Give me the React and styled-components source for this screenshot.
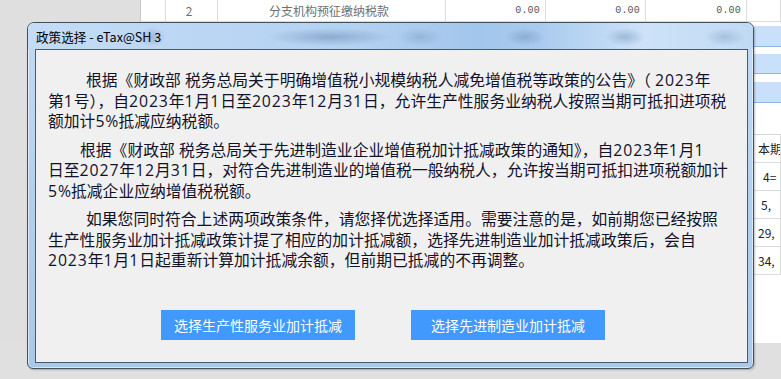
import React from "react";
import styled, { createGlobalStyle } from "styled-components";

const Global = createGlobalStyle`
  html, body { margin: 0; padding: 0; }
  body { width: 781px; height: 379px; overflow: hidden; background: #e0e0e0; }
  * { box-sizing: border-box; }
`;

const Page = styled.div`
  position: relative;
  width: 781px;
  height: 379px;
  overflow: hidden;
  display: flex;
  flex-direction: column;
  font-family: "Noto Sans CJK SC", "Noto Sans", sans-serif;
`;

const Backdrop = styled.div`
  display: flex;
  height: 343px;
`;

const SidePanel = styled.div`
  width: 141px;
  background: #dfdfdf;
  border-right: 1px solid #c9c9c9;
`;

const Sheet = styled.div`
  flex: 1;
  background: #ffffff;
  display: flex;
  flex-direction: column;
  overflow: hidden;
`;

const GridRow = styled.div`
  display: grid;
  grid-template-columns: 25px 52px 228px 100px 100px 101px 1fr;
  height: ${(p) => p.$h}px;
  border-bottom: 1px solid #dcdcdc;
`;

const Cell = styled.div`
  border-right: 1px solid #dcdcdc;
  display: flex;
  align-items: center;
  justify-content: ${(p) => p.$align || "center"};
  padding: 0 5px 0 ${(p) => p.$indent || 0}px;
  font-size: 12px;
  color: #707070;
  white-space: nowrap;
  overflow: hidden;
`;

const Num = styled.span`
  font-family: "Liberation Mono", monospace;
  font-size: 10px;
  color: #555;
  letter-spacing: 0.2px;
`;

const EdgeText = styled.span`
  font-family: "Noto Sans CJK SC", sans-serif;
  font-size: 12px;
  color: #222;
`;

const Spacer = styled.div`
  height: ${(p) => p.$h}px;
  border-bottom: ${(p) => (p.$line ? "1px solid #d6d6d6" : "none")};
`;

const BlueBand = styled.div`
  height: ${(p) => p.$h}px;
  background: #c9e0fa;
  border-bottom: 1px solid #8fb6e4;
`;

const Footer = styled.div`
  flex: 1;
  background: #e0e0e0;
`;

const Dialog = styled.div`
  position: absolute;
  left: 27px;
  top: 22px;
  width: 727px;
  height: 347px;
  border: 1px solid #44525f;
  border-radius: 7px 7px 6px 6px;
  background: linear-gradient(180deg, #c2dbf4 0%, #b2d0ee 50%, #a9c9ea 100%);
  box-shadow: inset 0 0 0 1px rgba(255, 255, 255, 0.55), 1px 1px 2px rgba(0, 0, 0, 0.25);
  display: flex;
  flex-direction: column;
  overflow: hidden;
`;

const TitleBar = styled.div`
  height: 26px;
  display: flex;
  align-items: center;
  padding-left: 8px;
  font-size: 12.6px;
  color: #000;
  background:
    radial-gradient(ellipse 14px 10px at 124px 14px, rgba(120, 150, 185, 0.45), transparent),
    radial-gradient(ellipse 62px 9px at 302px 14px, rgba(110, 140, 180, 0.55), transparent),
    radial-gradient(ellipse 22px 9px at 392px 14px, rgba(120, 150, 185, 0.4), transparent),
    radial-gradient(ellipse 20px 9px at 497px 14px, rgba(110, 140, 180, 0.45), transparent),
    radial-gradient(ellipse 20px 9px at 597px 14px, rgba(110, 140, 180, 0.45), transparent),
    radial-gradient(ellipse 20px 9px at 697px 14px, rgba(120, 150, 185, 0.4), transparent),
    linear-gradient(90deg, #c4dcf5 0%, #b9d5f3 30%, #b3d1f1 45%, #a3c6ec 62%, #a8caee 70%, #cde2f8 85%, #c1daf4 100%);
`;

const Client = styled.div`
  flex: 1;
  margin: 0 5px 5px 7px;
  background: #f0f0f0;
  border: 1px solid #4c5a68;
  padding: 20px 12px 0 12px;
  display: flex;
  flex-direction: column;
`;

const Para = styled.p`
  margin: 0 0 8px 0;
  font-family: "Open Sans", "Noto Sans CJK SC", sans-serif;
  font-size: 15.8px;
  line-height: 20.5px;
  color: #111128;
`;

const Line = styled.span`
  display: block;
  white-space: nowrap;
  padding-left: ${(p) => p.$indent || 0}px;
`;

const Digits = styled.span`
  letter-spacing: 0.9px;
`;

const ButtonRow = styled.div`
  display: flex;
  gap: 56px;
  margin-top: 31px;
  padding-left: 113px;
`;

const ActionButton = styled.button`
  width: 194px;
  height: 30px;
  border: none;
  background: #4198fd;
  color: #ffffff;
  font-family: "Noto Sans CJK SC", sans-serif;
  font-size: 14px;
  padding: 0;
  cursor: pointer;
`;

const paragraphs = [
  {
    indent: 38,
    lines: [
      "根据《财政部 税务总局关于明确增值税小规模纳税人减免增值税等政策的公告》（ 2023年",
      "第1号），自2023年1月1日至2023年12月31日，允许生产性服务业纳税人按照当期可抵扣进项税",
      "额加计5%抵减应纳税额。",
    ],
  },
  {
    indent: 32,
    lines: [
      "根据《财政部 税务总局关于先进制造业企业增值税加计抵减政策的通知》，自2023年1月1",
      "日至2027年12月31日，对符合先进制造业的增值税一般纳税人，允许按当期可抵扣进项税额加计",
      "5%抵减企业应纳增值税税额。",
    ],
  },
  {
    indent: 38,
    lines: [
      "如果您同时符合上述两项政策条件，请您择优选择适用。需要注意的是，如前期您已经按照",
      "生产性服务业加计抵减政策计提了相应的加计抵减额，选择先进制造业加计抵减政策后，会自",
      "2023年1月1日起重新计算加计抵减余额，但前期已抵减的不再调整。",
    ],
  },
];

const edgeRows = [
  { text: "本期", indent: 11 },
  { text: "4=", indent: 16 },
  { text: "5,", indent: 14 },
  { text: "29,", indent: 11 },
  { text: "34,", indent: 11 },
];

function renderLine(text) {
  return text.split(/(\d+)/).map((part, i) =>
    /^\d+$/.test(part) ? <Digits key={i}>{part}</Digits> : part
  );
}

export default function App() {
  return (
    <>
      <Global />
      <Page>
        <Backdrop>
          <SidePanel />
          <Sheet>
            <GridRow $h={22}>
              <Cell />
              <Cell>2</Cell>
              <Cell>分支机构预征缴纳税款</Cell>
              <Cell $align="flex-end"><Num>0.00</Num></Cell>
              <Cell $align="flex-end"><Num>0.00</Num></Cell>
              <Cell $align="flex-end"><Num>0.00</Num></Cell>
              <Cell />
            </GridRow>
            <Spacer $h={4} />
            <BlueBand $h={21} />
            <Spacer $h={7} />
            <BlueBand $h={20} />
            <Spacer $h={8} />
            <BlueBand $h={21} />
            <Spacer $h={32} $line />
            {edgeRows.map((r) => (
              <GridRow key={r.text} $h={28}>
                <Cell />
                <Cell />
                <Cell />
                <Cell />
                <Cell />
                <Cell />
                <Cell $align="flex-start" $indent={r.indent}>
                  <EdgeText>{r.text}</EdgeText>
                </Cell>
              </GridRow>
            ))}
          </Sheet>
        </Backdrop>
        <Footer />
        <Dialog>
          <TitleBar>政策选择 - eTax@SH 3</TitleBar>
          <Client>
            {paragraphs.map((p, i) => (
              <Para key={i}>
                {p.lines.map((l, j) => (
                  <Line key={j} $indent={j === 0 ? p.indent : 0}>
                    {renderLine(l)}
                  </Line>
                ))}
              </Para>
            ))}
            <ButtonRow>
              <ActionButton>选择生产性服务业加计抵减</ActionButton>
              <ActionButton>选择先进制造业加计抵减</ActionButton>
            </ButtonRow>
          </Client>
        </Dialog>
      </Page>
    </>
  );
}
